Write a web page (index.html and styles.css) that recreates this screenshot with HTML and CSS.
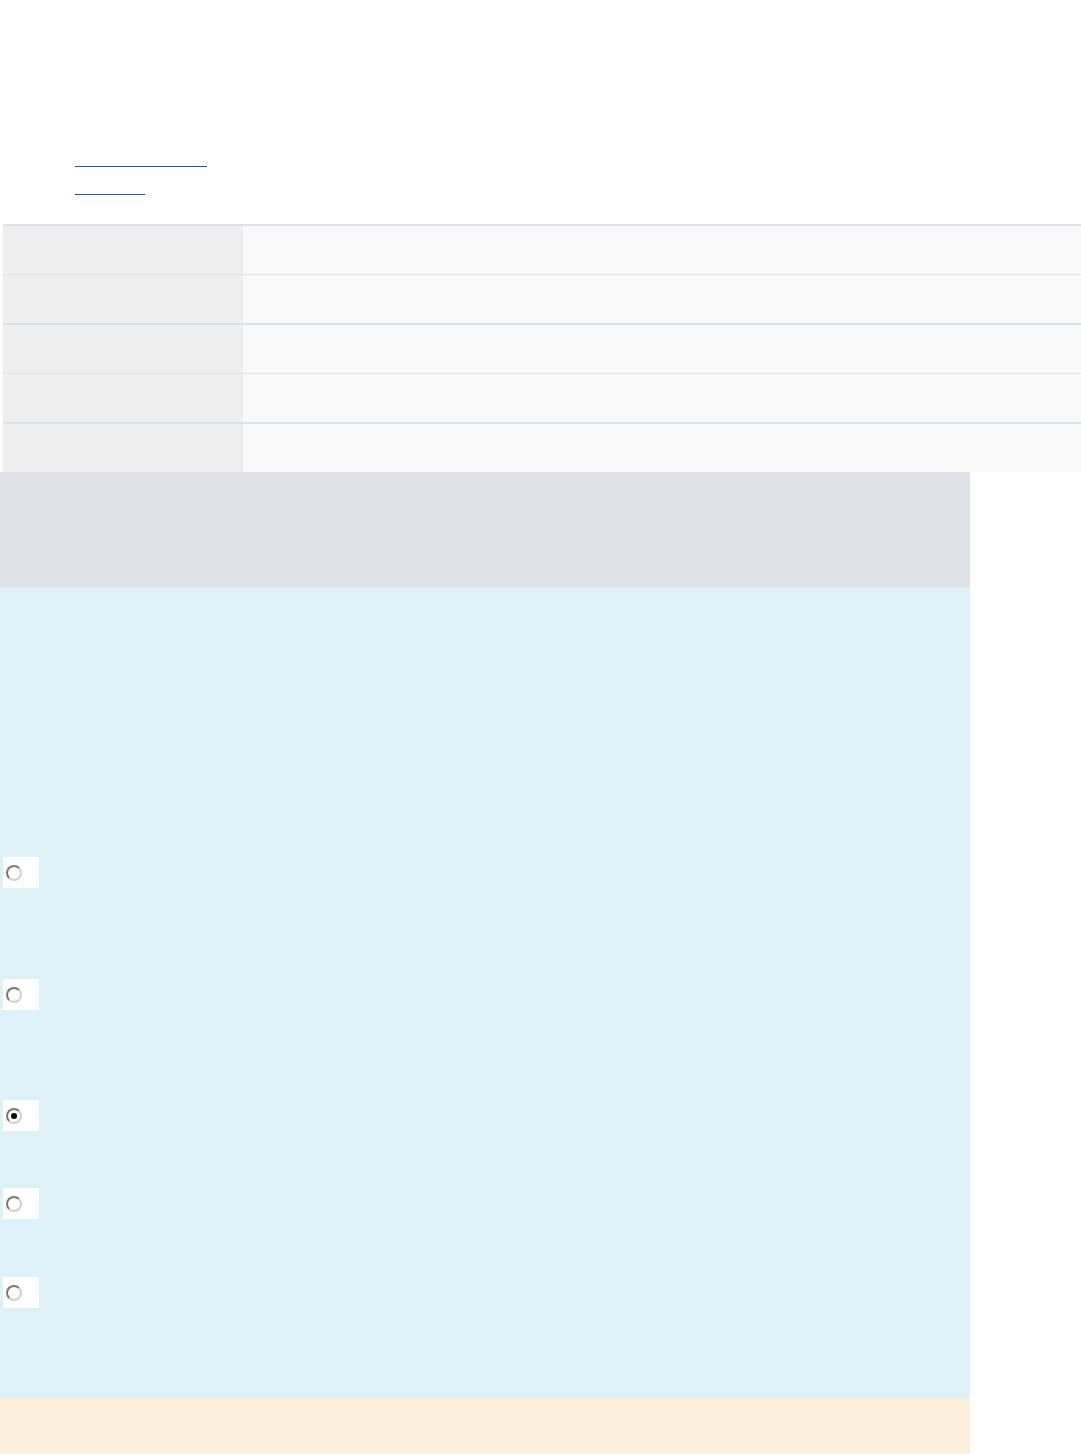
FILE: index.html
```html
<!DOCTYPE html>
<html lang="en">
<head>
<meta charset="utf-8">
<title>Quiz review</title>
<link rel="stylesheet" href="styles.css">
</head>
<body>
<header class="skip">
  <ul class="skip-list">
    <li><a class="skip-link long" href="#summary">Skip quiz navigation</a></li>
    <li><a class="skip-link short" href="#q1">Skip main</a></li>
  </ul>
</header>

<div class="summary" id="summary">
  <div class="row"><div class="cell-h"></div><div class="cell-v"></div></div>
  <div class="row thick"><div class="cell-h"></div><div class="cell-v"></div></div>
  <div class="row"><div class="cell-h"></div><div class="cell-v"></div></div>
  <div class="row thick"><div class="cell-h"></div><div class="cell-v"></div></div>
  <div class="row last"><div class="cell-h"></div><div class="cell-v"></div></div>
</div>

<section class="que" id="q1">
  <div class="info"></div>
  <div class="content">
    <div class="answers">
      <div class="answer a1"><span class="radiobox"><span class="radio"></span></span></div>
      <div class="answer a2"><span class="radiobox"><span class="radio"></span></span></div>
      <div class="answer a3"><span class="radiobox"><span class="radio checked"></span></span></div>
      <div class="answer a4"><span class="radiobox"><span class="radio"></span></span></div>
      <div class="answer a5"><span class="radiobox"><span class="radio"></span></span></div>
    </div>
  </div>
  <div class="outcome"></div>
</section>
</body>
</html>
```

FILE: styles.css
```css
html, body {
  margin: 0;
  padding: 0;
  background: #ffffff;
  font-family: "Liberation Sans", Arial, sans-serif;
}

.skip {
  padding-top: 146px;
}

.skip-list {
  list-style: none;
  margin: 0;
  padding: 0 0 0 75px;
}

.skip-list li {
  height: 28px;
}

.skip-link {
  display: inline-block;
  height: 20px;
  border-bottom: 1px solid #0b5dad;
  color: transparent;
  overflow: hidden;
  white-space: nowrap;
  font-size: 1px;
  text-decoration: none;
  vertical-align: top;
}

.skip-link.long { width: 132px; }
.skip-link.short { width: 70px; }

.summary {
  margin: 22px 0 0 3px;
  border-top: 2px solid #dee2e6;
}

.row {
  display: flex;
  height: 48px;
  border-bottom: 1px solid #dee2e6;
}

.row.thick { border-bottom-width: 2px; }
.row.last { border-bottom: 0; }

.cell-h {
  width: 240px;
  flex: none;
  background: #efefef;
}

.cell-v {
  flex: 1;
  background: #f9f9f9;
}

.que {
  width: 970px;
}

.info {
  height: 115px;
  background: #dee2e6;
}

.content {
  height: 811px;
  background: #def1f7;
  box-sizing: border-box;
  padding-top: 270px;
}

.answers {
  display: flex;
  flex-direction: column;
}

.answer { height: 31px; }
.a1 { margin-bottom: 91px; }
.a2 { margin-bottom: 90px; }
.a3 { margin-bottom: 57px; }
.a4 { margin-bottom: 58px; }

.radiobox {
  display: flex;
  align-items: center;
  margin-left: 3px;
  width: 36px;
  height: 31px;
  background: #ffffff;
  box-sizing: border-box;
  padding-left: 3px;
}

.radio {
  position: relative;
  width: 16px;
  height: 16px;
  border-radius: 50%;
  box-sizing: border-box;
  border: 2px solid;
  border-color: #7a7a7a #d0d0d0 #d0d0d0 #7a7a7a;
  background: #fbfbfb;
}

.radio.checked::after {
  content: "";
  position: absolute;
  left: 3px;
  top: 3px;
  width: 6px;
  height: 6px;
  border-radius: 50%;
  background: #000000;
}

.outcome {
  height: 60px;
  background: #fcefdc;
}
```
